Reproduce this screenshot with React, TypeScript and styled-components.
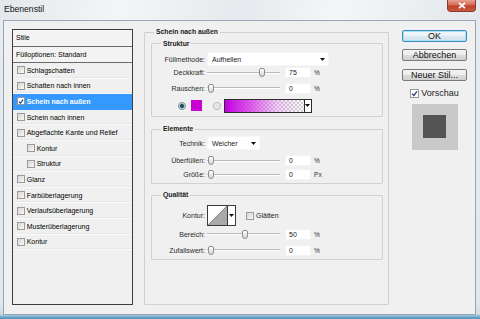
import React from "react";
import styled, { createGlobalStyle, css } from "styled-components";

const GlobalStyle = createGlobalStyle`
  html, body { margin: 0; padding: 0; width: 480px; height: 319px; overflow: hidden; background: #dfe6ee; }
  * { box-sizing: border-box; }
  body { font-family: "Liberation Sans", Arial, sans-serif; color: #000; }
`;

const Window = styled.div`
  width: 480px;
  height: 319px;
  display: flex;
  flex-direction: column;
  padding: 0 4px 4px 3px;
  background: linear-gradient(180deg, #eceff3 0px, #e6ebf0 20px, #e2e8ee 300px, #cfdde8 314px, #6fa8c8 317px, #4f93ba 319px);
`;

const TitleBar = styled.div`
  height: 20px;
  display: flex;
  justify-content: space-between;
  align-items: flex-start;
  background: linear-gradient(100deg, #e4e7eb 0%, #f4f5f7 25%, #e6e9ed 50%, #f5f6f8 70%, #e3e7eb 100%);
  margin: 0 -4px 0 -3px;
  padding: 0 4px 0 4px;
`;

const Title = styled.span`
  font-size: 8.6px;
  line-height: 10px;
  margin-top: 4px;
  color: #111;
`;

const CloseButton = styled.div`
  width: 29px;
  height: 12px;
  display: flex;
  align-items: center;
  justify-content: center;
  border: 1px solid #8a3a30;
  border-top: none;
  border-radius: 0 0 4px 4px;
  background: linear-gradient(180deg, #e8a08f 0%, #d46a55 45%, #c1402a 55%, #c95a3f 100%);
`;

const Panel = styled.div`
  flex: 1;
  display: flex;
  align-items: stretch;
  background: #f0f0f0;
  border: 1px solid #9aa5b1;
  padding: 6px 0 9px 8px;
`;

const StyleList = styled.div`
  width: 121px;
  margin-top: 2px;
  border: 1px solid #3d3d3d;
  background: #f0f0f0;
  display: flex;
  flex-direction: column;
`;

const HeaderRow = styled.div`
  height: 16.5px;
  border-bottom: 1px solid #6a6a6a;
  display: flex;
  align-items: center;
  padding-left: 3px;
  font-size: 7px;
  background: #f3f3f3;
`;

const ListRow = styled.div<{ $indent?: boolean; $selected?: boolean }>`
  height: 15.6px;
  display: flex;
  align-items: center;
  gap: 2px;
  padding-left: ${(p) => (p.$indent ? "13.7px" : "3.7px")};
  font-size: 7px;
  border-bottom: 1px solid #fbfbfb;
  box-shadow: inset 0 -1px 0 #e6e6e6;
  ${(p) =>
    p.$selected &&
    css`
      background: #3399ff;
      color: #fff;
      font-weight: bold;
      box-shadow: none;
      border-bottom-color: #3399ff;
    `}
`;

const Box = styled.span<{ $checked?: boolean; $size?: number }>`
  width: ${(p) => p.$size ?? 8}px;
  height: ${(p) => p.$size ?? 8}px;
  flex: none;
  border: 1px solid #9a9a9a;
  background: ${(p) => (p.$checked ? "#fff" : "linear-gradient(135deg, #d8d8d8, #f7f7f7)")};
  display: flex;
  align-items: center;
  justify-content: center;
`;

const Check = () => (
  <svg width="7" height="7" viewBox="0 0 7 7">
    <path d="M1 3.6 L2.8 5.4 L6 1.3" fill="none" stroke="#2a3f6a" strokeWidth="1.3" />
  </svg>
);

const Checkbox = ({ checked, size }: { checked?: boolean; size?: number }) => (
  <Box $checked={checked} $size={size}>
    {checked && <Check />}
  </Box>
);

const Group = styled.fieldset`
  width: 245px;
  margin: 0 0 0 11px;
  min-width: 0;
  border: 1px solid #d0d0d0;
  border-radius: 1px;
  padding: 1.5px 5px 0 6px;
`;

const Legend = styled.legend<{ $inner?: boolean }>`
  font-size: 6.8px;
  font-weight: bold;
  line-height: 10px;
  height: 10px;
  padding: 0 2px;
  margin-left: ${(p) => (p.$inner ? "9px" : "3px")};
  color: #1a1a1a;
`;

const SubGroup = styled.fieldset<{ $pt: number; $pb: number; $mt: number }>`
  margin: ${(p) => p.$mt}px 0 0 0;
  min-width: 0;
  border: 1px solid #d0d0d0;
  border-radius: 1px;
  padding: ${(p) => p.$pt}px 0 ${(p) => p.$pb}px 0;
`;

const Row = styled.div<{ $h: number; $mt?: number }>`
  height: ${(p) => p.$h}px;
  margin-top: ${(p) => p.$mt ?? 0}px;
  display: flex;
  align-items: center;
`;

const Label = styled.span`
  width: 53px;
  margin-right: 2px;
  text-align: right;
  font-size: 7px;
  color: #2b2b2b;
  white-space: nowrap;
`;

const SelectBox = styled.div<{ $w: number }>`
  width: ${(p) => p.$w}px;
  height: 14px;
  background: #fff;
  border: 1px solid #f6f6f6;
  display: flex;
  align-items: center;
  justify-content: space-between;
  padding: 0 3px 0 4px;
  font-size: 7px;
  color: #1a1a1a;
`;

const DownArrow = () => (
  <svg width="5" height="3" viewBox="0 0 5 3">
    <polygon points="0,0 5,0 2.5,3" fill="#111" />
  </svg>
);

const Track = styled.div`
  position: relative;
  width: 76px;
  height: 12px;
  flex: none;
  &::before {
    content: "";
    position: absolute;
    left: 0;
    width: 73px;
    top: 5px;
    height: 1px;
    background: #b9b9b9;
    box-shadow: 0 1px 0 #ffffff;
  }
`;

const Thumb = styled.span`
  position: absolute;
  top: 1.5px;
  width: 6px;
  height: 9px;
  border: 1px solid #8d8d8d;
  border-radius: 2px 2px 3px 3px;
  background: linear-gradient(180deg, #ffffff, #d6d6d6);
`;

const NumInput = styled.div`
  width: 26px;
  height: 11px;
  margin-left: 2px;
  background: #fff;
  border: 1px solid #f3f3f3;
  font-size: 7px;
  line-height: 9px;
  padding-left: 3px;
  color: #1a1a1a;
`;

const Unit = styled.span`
  margin-left: 3px;
  font-size: 6.6px;
  color: #333;
`;

const Slider = ({ value }: { value: number }) => (
  <Track>
    <Thumb style={{ left: `${0.5 + (value / 100) * 69}px` }} />
  </Track>
);

const SliderRow = ({
  label,
  value,
  unit,
  h,
  mt,
}: {
  label: string;
  value: number;
  unit: string;
  h: number;
  mt?: number;
}) => (
  <Row $h={h} $mt={mt}>
    <Label>{label}</Label>
    <Slider value={value} />
    <NumInput>{value}</NumInput>
    <Unit>{unit}</Unit>
  </Row>
);

const Radio = styled.span<{ $on?: boolean; $ml: number }>`
  width: 8px;
  height: 8px;
  margin-left: ${(p) => p.$ml}px;
  flex: none;
  border-radius: 50%;
  border: 1px solid ${(p) => (p.$on ? "#7d8c96" : "#b4b4b4")};
  background: ${(p) =>
    p.$on
      ? "radial-gradient(circle, #1f4e5e 0 1.6px, #8fb4c4 2.2px, #e9eef0 3px)"
      : "radial-gradient(circle, #e4e4e4 0 1.5px, #f8f8f8 3px)"};
`;

const Swatch = styled.span`
  width: 11px;
  height: 11px;
  margin-left: 4.7px;
  flex: none;
  background: #c800d2;
`;

const GradientBox = styled.div`
  width: 88px;
  height: 14px;
  margin-left: 3.3px;
  border: 1px solid #2b2b2b;
  display: flex;
`;

const GradientFill = styled.div`
  flex: 1;
  background: linear-gradient(90deg, #c400e0 0%, rgba(214, 50, 232, 0.75) 35%, rgba(226, 120, 240, 0.35) 65%, rgba(240, 200, 250, 0) 100%),
    repeating-conic-gradient(#cfcfcf 0 25%, #ffffff 0 50%) 0 0 / 4px 4px;
`;

const ArrowPart = styled.div`
  width: 7px;
  border-left: 1px solid #2b2b2b;
  background: #fff;
  display: flex;
  align-items: center;
  justify-content: center;
`;

const ContourBox = styled.div`
  width: 29px;
  height: 21px;
  border: 1px solid #3a3a3a;
  display: flex;
  background: #fff;
`;

const ContourPreview = styled.div`
  width: 19px;
  display: flex;
`;

const CheckLabel = styled.label<{ $size?: number; $gap?: number }>`
  display: flex;
  align-items: center;
  gap: ${(p) => p.$gap ?? 2}px;
  font-size: ${(p) => p.$size ?? 7}px;
  color: #222;
`;

const RightCol = styled.div`
  width: 65px;
  margin: 2.5px 0 0 13px;
  display: flex;
  flex-direction: column;
  align-items: center;
`;

const Button = styled.button<{ $default?: boolean }>`
  width: 65px;
  height: 12px;
  margin-bottom: 7.5px;
  padding: 0;
  font-family: "Liberation Sans", Arial, sans-serif;
  font-size: 9px;
  line-height: 10px;
  color: #111;
  border: 1px solid #7a7a7a;
  border-radius: 2px;
  background: linear-gradient(180deg, #f4f4f4 0%, #ececec 50%, #dcdcdc 50%, #d0d0d0 100%);
  ${(p) =>
    p.$default &&
    css`
      border-color: #3c8fbf;
      box-shadow: inset 0 0 0 1px #a8e0f6;
      background: linear-gradient(180deg, #f2f8fb 0%, #e9f2f7 50%, #dbe8ef 50%, #d3e3ec 100%);
    `}
`;

const Preview = styled.div`
  width: 46px;
  height: 46px;
  margin-top: 5.5px;
  background: #c9c9c9;
  display: flex;
  align-items: center;
  justify-content: center;
`;

const PreviewSquare = styled.div`
  width: 23px;
  height: 23px;
  background: #545454;
`;

const styles: { name: string; indent?: boolean; checked?: boolean; selected?: boolean }[] = [
  { name: "Schlagschatten" },
  { name: "Schatten nach innen" },
  { name: "Schein nach außen", checked: true, selected: true },
  { name: "Schein nach innen" },
  { name: "Abgeflachte Kante und Relief" },
  { name: "Kontur", indent: true },
  { name: "Struktur", indent: true },
  { name: "Glanz" },
  { name: "Farbüberlagerung" },
  { name: "Verlaufsüberlagerung" },
  { name: "Musterüberlagerung" },
  { name: "Kontur" },
];

export default function App() {
  return (
    <>
      <GlobalStyle />
      <Window>
        <TitleBar>
          <Title>Ebenenstil</Title>
          <CloseButton>
            <svg width="8" height="7" viewBox="0 0 8 7">
              <path d="M1 0.8 L7 6.2 M7 0.8 L1 6.2" stroke="#fff" strokeWidth="1.8" />
            </svg>
          </CloseButton>
        </TitleBar>
        <Panel>
          <StyleList>
            <HeaderRow>Stile</HeaderRow>
            <HeaderRow>Fülloptionen: Standard</HeaderRow>
            {styles.map((s, i) => (
              <ListRow key={i} $indent={s.indent} $selected={s.selected}>
                <Checkbox checked={s.checked} />
                <span>{s.name}</span>
              </ListRow>
            ))}
          </StyleList>

          <Group>
            <Legend>Schein nach außen</Legend>
            <SubGroup $pt={3.5} $pb={1.5} $mt={0}>
              <Legend $inner>Struktur</Legend>
              <Row $h={14}>
                <Label>Füllmethode:</Label>
                <SelectBox $w={122}>
                  <span>Aufhellen</span>
                  <DownArrow />
                </SelectBox>
              </Row>
              <SliderRow label="Deckkraft:" value={75} unit="%" h={13} />
              <SliderRow label="Rauschen:" value={0} unit="%" h={18} />
              <Row $h={17}>
                <Radio $on $ml={26} />
                <Swatch />
                <Radio $ml={11} />
                <GradientBox>
                  <GradientFill />
                  <ArrowPart>
                    <DownArrow />
                  </ArrowPart>
                </GradientBox>
              </Row>
            </SubGroup>

            <SubGroup $pt={2} $pb={1} $mt={7.5}>
              <Legend $inner>Elemente</Legend>
              <Row $h={14}>
                <Label>Technik:</Label>
                <SelectBox $w={53}>
                  <span>Weicher</span>
                  <DownArrow />
                </SelectBox>
              </Row>
              <SliderRow label="Überfüllen:" value={0} unit="%" h={14} mt={3.5} />
              <SliderRow label="Größe:" value={0} unit="Px" h={14} />
            </SubGroup>

            <SubGroup $pt={5} $pb={2.5} $mt={6.5}>
              <Legend $inner>Qualität</Legend>
              <Row $h={21}>
                <Label>Kontur:</Label>
                <ContourBox>
                  <ContourPreview>
                    <svg width="19" height="19" viewBox="0 0 19 19">
                      <polygon points="0,19 19,0 19,19" fill="#a9a9a9" />
                      <line x1="0" y1="19" x2="19" y2="0" stroke="#7a7a7a" strokeWidth="0.8" />
                    </svg>
                  </ContourPreview>
                  <ArrowPart style={{ width: 8, borderColor: "#3a3a3a" }}>
                    <DownArrow />
                  </ArrowPart>
                </ContourBox>
                <CheckLabel style={{ marginLeft: 10 }}>
                  <Checkbox />
                  <span>Glätten</span>
                </CheckLabel>
              </Row>
              <SliderRow label="Bereich:" value={50} unit="%" h={12} mt={2} />
              <SliderRow label="Zufallswert:" value={0} unit="%" h={12} mt={4} />
            </SubGroup>
          </Group>

          <RightCol>
            <Button $default>OK</Button>
            <Button>Abbrechen</Button>
            <Button>Neuer Stil...</Button>
            <CheckLabel $size={9} $gap={2}>
              <Checkbox checked size={9} />
              <span>Vorschau</span>
            </CheckLabel>
            <Preview>
              <PreviewSquare />
            </Preview>
          </RightCol>
        </Panel>
      </Window>
    </>
  );
}
